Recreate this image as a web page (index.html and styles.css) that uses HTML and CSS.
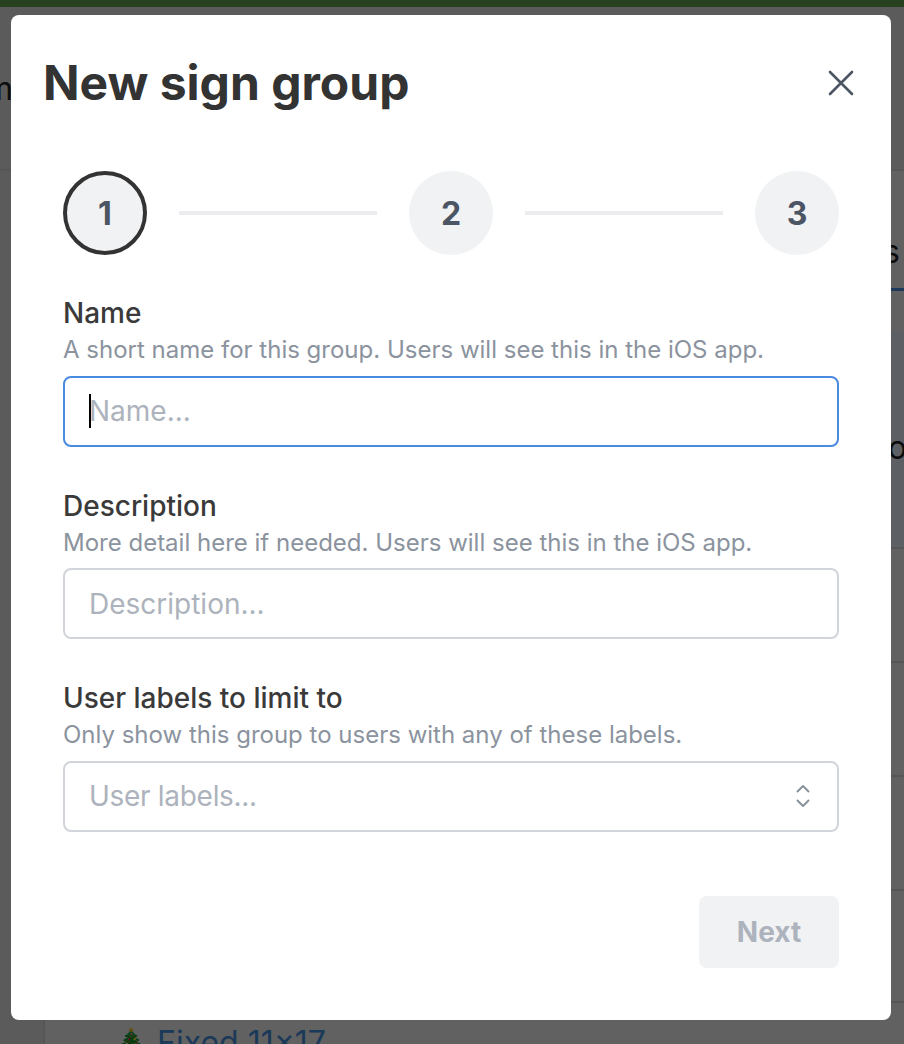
FILE: index.html
```html
<!DOCTYPE html>
<html lang="en">
<head>
    <meta charset="UTF-8">
    <meta name="viewport" content="width=device-width, initial-scale=1.0">
    <title>New sign group</title>
    <link rel="stylesheet" href="styles.css">
</head>
<body>

<!-- page behind the modal, only the edges show -->
<div class="page">
    <div class="top-bar"></div>
    <div class="page-header"><span class="side-letter">m</span></div>
    <div class="page-main">
        <div class="side-menu"></div>
        <div class="page-content">
            <div class="tabs"><span class="tab-text">s</span></div>
            <div class="toolbar"></div>
            <div class="table-head"><span class="head-text">o</span></div>
            <div class="table-row"></div>
            <div class="table-row"></div>
            <div class="table-row"></div>
            <div class="table-row short-row"></div>
            <div class="table-row last-row"><span class="tree">🎄</span><a class="row-link">Fixed 11x17</a></div>
        </div>
    </div>
</div>

<div class="backdrop"></div>

<div class="modal">
    <div class="modal-header">
        <h1>New sign group</h1>
        <button class="close-btn" type="button">
            <svg width="26" height="26" viewBox="0 0 26 26" fill="none" stroke="#4b5563" stroke-width="2.6" stroke-linecap="round">
                <path d="M2 2 L24 24 M24 2 L2 24"/>
            </svg>
        </button>
    </div>

    <div class="steps">
        <div class="step active">1</div>
        <div class="step-line"></div>
        <div class="step">2</div>
        <div class="step-line"></div>
        <div class="step">3</div>
    </div>

    <form class="fields">
        <div class="field">
            <label>Name</label>
            <p class="hint">A short name for this group. Users will see this in the iOS app.</p>
            <div class="input focused"><span class="caret"></span><span class="placeholder">Name...</span></div>
        </div>
        <div class="field">
            <label>Description</label>
            <p class="hint">More detail here if needed. Users will see this in the iOS app.</p>
            <div class="input"><span class="placeholder">Description...</span></div>
        </div>
        <div class="field">
            <label>User labels to limit to</label>
            <p class="hint">Only show this group to users with any of these labels.</p>
            <div class="input select">
                <span class="placeholder">User labels...</span>
                <svg width="14" height="24" viewBox="0 0 14 24" fill="none" stroke="#8b939e" stroke-width="2" stroke-linecap="round" stroke-linejoin="round">
                    <path d="M1.5 7.5 L7 2 L12.5 7.5 M1.5 16.5 L7 22 L12.5 16.5"/>
                </svg>
            </div>
        </div>
    </form>

    <div class="modal-footer">
        <button class="next-btn" type="button" disabled>Next</button>
    </div>
</div>

</body>
</html>
```

FILE: styles.css
```css
* {
    box-sizing: border-box;
}

html, body {
    margin: 0;
    height: 100%;
    overflow: hidden;
}

body {
    font-family: Inter, "Liberation Sans", sans-serif;
    background-color: #f2f2f2;
    color: #333333;
}

/* page behind */
.page {
    height: 1044px;
    display: flex;
    flex-direction: column;
    overflow: hidden;
}

.top-bar {
    height: 7px;
    background-color: #62a04d;
    flex-shrink: 0;
}

.page-header {
    height: 164px;
    flex-shrink: 0;
    background-color: #e4e4e4;
    border-bottom: 2px solid #d8d8d8;
    padding-top: 62px;
    overflow: hidden;
}

.page-main {
    flex: 1;
    display: flex;
    min-height: 0;
}

.side-menu {
    width: 45px;
    background-color: #e4e4e4;
    border-right: 2px solid #d8d8d8;
    flex-shrink: 0;
}

.side-letter {
    font-size: 32px;
    color: #222222;
    margin-left: -15px;
}

.page-content {
    flex: 1;
    display: flex;
    flex-direction: column;
    min-width: 0;
}

.tabs {
    height: 120px;
    flex-shrink: 0;
    border-bottom: 3px solid #4d8fe0;
    display: flex;
    justify-content: flex-end;
    align-items: flex-end;
    padding: 0 4px 17px 0;
}

.tab-text {
    font-size: 32px;
    line-height: 38px;
    color: #222222;
}

.toolbar {
    height: 40px;
    flex-shrink: 0;
}

.table-head {
    height: 218px;
    flex-shrink: 0;
    background-color: #e6effa;
    border-bottom: 2px solid #d8d8d8;
    display: flex;
    justify-content: flex-end;
    padding-top: 98px;
}

.head-text {
    font-size: 32px;
    line-height: 38px;
    color: #222222;
    margin-right: -3px;
}

.table-row {
    height: 114px;
    flex-shrink: 0;
    border-bottom: 2px solid #d8d8d8;
}

.short-row {
    height: 112px;
}

.last-row {
    height: 42px;
    display: flex;
    align-items: flex-start;
    gap: 12px;
    padding: 21px 0 0 75px;
    border-bottom: none;
    white-space: nowrap;
    overflow: hidden;
}

.tree {
    font-size: 26px;
    line-height: 36px;
    margin-left: -5px;
}

.row-link {
    font-size: 32px;
    line-height: 38px;
    color: #458fdc;
    margin-left: -2px;
}

.backdrop {
    position: fixed;
    inset: 0;
    background-color: rgba(0, 0, 0, 0.6);
}

/* modal */
.modal {
    position: fixed;
    top: 15px;
    left: 11px;
    width: 880px;
    height: 1005px;
    background-color: #ffffff;
    border-radius: 8px;
    padding: 0 52px;
}

.modal-header {
    display: flex;
    justify-content: space-between;
    align-items: center;
    margin: 0 -15px 0 -20px;
    height: 136px;
}

h1 {
    margin: 0;
    font-size: 48px;
    font-weight: 700;
    line-height: 56px;
    color: #333333;
}

.close-btn {
    background: none;
    border: none;
    padding: 0;
    height: 26px;
    display: block;
}

.steps {
    display: flex;
    align-items: center;
    margin-top: 20px;
    gap: 32px;
}

.step {
    width: 84px;
    height: 84px;
    border-radius: 50%;
    background-color: #f1f2f4;
    color: #4b5563;
    font-size: 32px;
    font-weight: 700;
    display: flex;
    align-items: center;
    justify-content: center;
    flex-shrink: 0;
}

.step.active {
    border: 4px solid #333333;
}

.step-line {
    flex: 1;
    height: 4px;
    background-color: #ececf0;
}

.fields {
    margin-top: 38px;
    display: flex;
    flex-direction: column;
    gap: 39px;
}

label {
    display: block;
    font-size: 28px;
    font-weight: 500;
    line-height: 40px;
    color: #3a3a3a;
}

.hint {
    margin: 0 0 8.5px 0;
    font-size: 24px;
    line-height: 34px;
    color: #8b939e;
}

.input {
    height: 71px;
    border: 2px solid #d1d5db;
    border-radius: 8px;
    padding: 0 24px;
    display: flex;
    align-items: center;
    position: relative;
    background-color: #ffffff;
}

.input.focused {
    border-color: #4a8ae0;
}

.input.select {
    justify-content: space-between;
    padding-right: 27px;
}

.placeholder {
    font-size: 28px;
    color: #adb3bc;
}

.select .placeholder {
    letter-spacing: -0.3px;
}

.caret {
    width: 2px;
    height: 34px;
    background-color: #000000;
    position: absolute;
    left: 24px;
    top: 16px;
}

.modal-footer {
    display: flex;
    justify-content: flex-end;
    margin-top: 64.5px;
}

.next-btn {
    width: 140px;
    height: 72px;
    border: none;
    border-radius: 8px;
    background-color: #f1f2f4;
    color: #adb3bc;
    font-family: inherit;
    font-size: 28px;
    font-weight: 700;
}
```
